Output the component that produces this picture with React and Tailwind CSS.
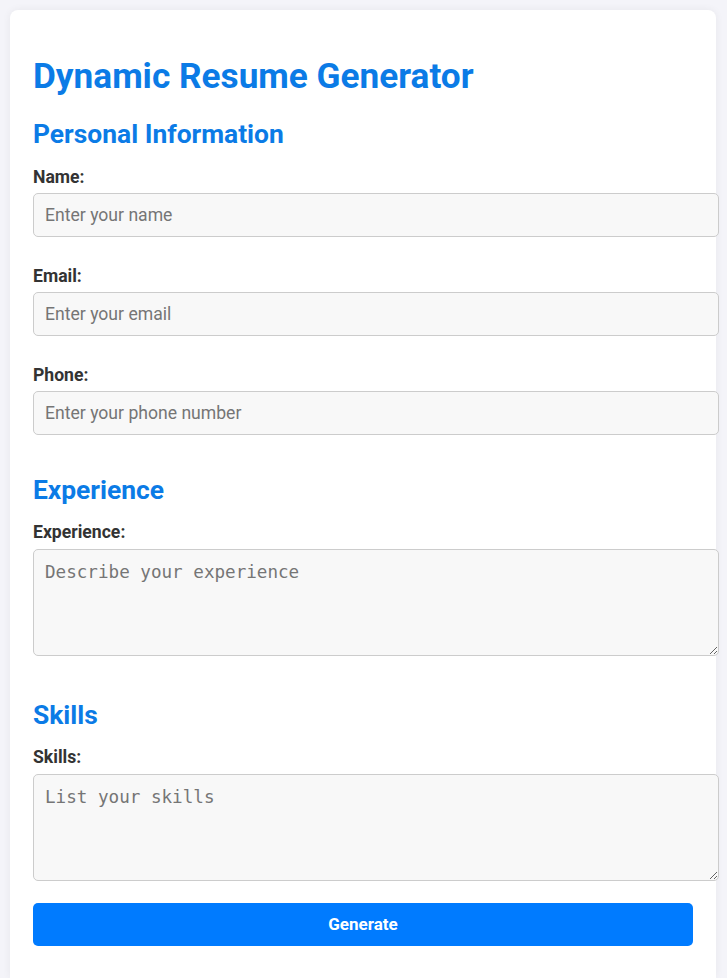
import React from 'react';

const Field = ({ label, placeholder, type = 'text' }) => (
    <div>
        <label className="block text-[17.6px] font-bold text-[#333] leading-[21px] mb-[5px]">{label}</label>
        <input
            type={type}
            placeholder={placeholder}
            className="block w-[686px] h-[44px] px-[11px] bg-[#f8f8f8] border border-[#cccccc] rounded-[5px] text-[17.6px] text-[#333] placeholder:text-[#757575] outline-none mb-[29px]"
        />
    </div>
);

const Area = ({ label, placeholder }) => (
    <div>
        <label className="block text-[17.6px] font-bold text-[#333] leading-[21px] mb-[6px]">{label}</label>
        <textarea
            placeholder={placeholder}
            className="block w-[686px] h-[107px] px-[11px] pt-[9px] pb-[10px] bg-[#f8f8f8] border border-[#cccccc] rounded-[5px] text-[17.6px] text-[#333] placeholder:text-[#757575] outline-none font-['DejaVu_Sans_Mono',monospace]"
        />
    </div>
);

const App = () => {
    return (
        <div className="min-h-[978px] bg-[#f4f4f9] pt-[10px] pl-[10px] font-['Roboto',sans-serif]">
            <div className="w-[706px] min-h-[968px] bg-white rounded-t-[8px] shadow-[0_0_8px_rgba(0,0,0,0.06)] p-[23px]">
                <h1 className="mt-[23px] mb-[22px] text-[35.2px] font-bold text-[#0b7be6] leading-[41px]">Dynamic Resume Generator</h1>

                <h2 className="text-[26.4px] font-bold text-[#0b7be6] leading-[31px] mb-[17px]">Personal Information</h2>
                <Field label="Name:" placeholder="Enter your name" />
                <Field label="Email:" placeholder="Enter your email" type="email" />
                <Field label="Phone:" placeholder="Enter your phone number" type="tel" />

                <h2 className="mt-[40px] text-[26.4px] font-bold text-[#0b7be6] leading-[31px] mb-[16px]">Experience</h2>
                <Area label="Experience:" placeholder="Describe your experience" />

                <h2 className="mt-[44px] text-[26.4px] font-bold text-[#0b7be6] leading-[31px] mb-[16px]">Skills</h2>
                <Area label="Skills:" placeholder="List your skills" />

                <button className="block mt-[22px] w-[660px] h-[43px] bg-[#007bff] rounded-[5px] text-white text-[17px] font-bold">
                    Generate
                </button>
            </div>
        </div>
    );
};

export default App;
